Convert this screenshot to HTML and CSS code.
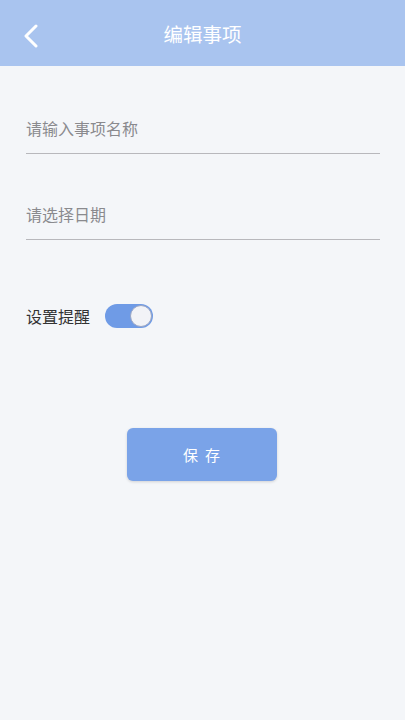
FILE: index.html
```html
<!DOCTYPE html>
<html lang="zh-CN">
<head>
    <meta charset="UTF-8">
    <meta name="viewport" content="width=device-width, initial-scale=1.0">
    <title>编辑事项</title>
    <link rel="stylesheet" href="styles.css">
</head>
<body>
    <div class="header">
        <span class="back">
            <svg width="16" height="24" viewBox="0 0 16 24"><path d="M13 2 L3 12 L13 22" fill="none" stroke="#fff" stroke-width="3" stroke-linecap="round" stroke-linejoin="round"/></svg>
        </span>
        <h1>编辑事项</h1>
    </div>
    <div class="form">
        <div class="field first"><input type="text" placeholder="请输入事项名称"></div>
        <div class="field"><input type="text" placeholder="请选择日期"></div>
        <div class="remind">
            <span>设置提醒</span>
            <label class="switch"><input type="checkbox" checked><span class="slider"></span></label>
        </div>
        <div class="actions">
            <button class="save">保存</button>
        </div>
    </div>
</body>
</html>
```

FILE: styles.css
```css
body {
    margin: 0;
    background-color: #f4f6f9;
    font-family: "Noto Sans CJK SC", "Noto Sans", sans-serif;
    height: 720px;
}

.header {
    height: 66px;
    background-color: #a9c4ef;
    display: flex;
    align-items: center;
    justify-content: center;
    position: relative;
}

.header h1 {
    margin: 0;
    font-size: 19.5px;
    font-weight: normal;
    color: #fff;
}

.back {
    position: absolute;
    left: 23px;
    top: 24px;
    display: flex;
}

.form {
    padding: 0 25px 0 26px;
}

.field {
    border-bottom: 1px solid #b8b8bc;
    margin-top: 45px;
}

.field.first {
    margin-top: 47px;
}

.field input {
    display: block;
    width: 100%;
    box-sizing: border-box;
    border: none;
    background: transparent;
    font-family: inherit;
    font-size: 16px;
    line-height: 30px;
    height: 40px;
    padding: 0 0 10px;
    margin: 0;
    outline: none;
}

.field input::placeholder {
    color: #8a8a8e;
}

.remind {
    display: flex;
    align-items: center;
    gap: 15px;
    height: 24px;
    margin-top: 64px;
    font-size: 16px;
    color: #333;
}

.switch {
    position: relative;
    display: inline-block;
    width: 48px;
    height: 24px;
}

.switch input {
    display: none;
}

.slider {
    position: absolute;
    inset: 0;
    background-color: #6f9be6;
    border-radius: 12px;
}

.slider::after {
    content: "";
    position: absolute;
    right: 1px;
    top: 1px;
    width: 20px;
    height: 20px;
    border-radius: 50%;
    background-color: #f2f3f7;
    border: 1px solid #9aa6c4;
}

.actions {
    display: flex;
    justify-content: center;
    margin-top: 100px;
}

.save {
    width: 150px;
    height: 53px;
    margin-left: -3px;
    border: none;
    border-radius: 6px;
    background-color: #7aa3e8;
    color: #fff;
    font-family: inherit;
    font-size: 15px;
    letter-spacing: 7px;
    text-indent: 7px;
    box-shadow: 0 1px 3px rgba(0, 0, 0, 0.15);
}
```
